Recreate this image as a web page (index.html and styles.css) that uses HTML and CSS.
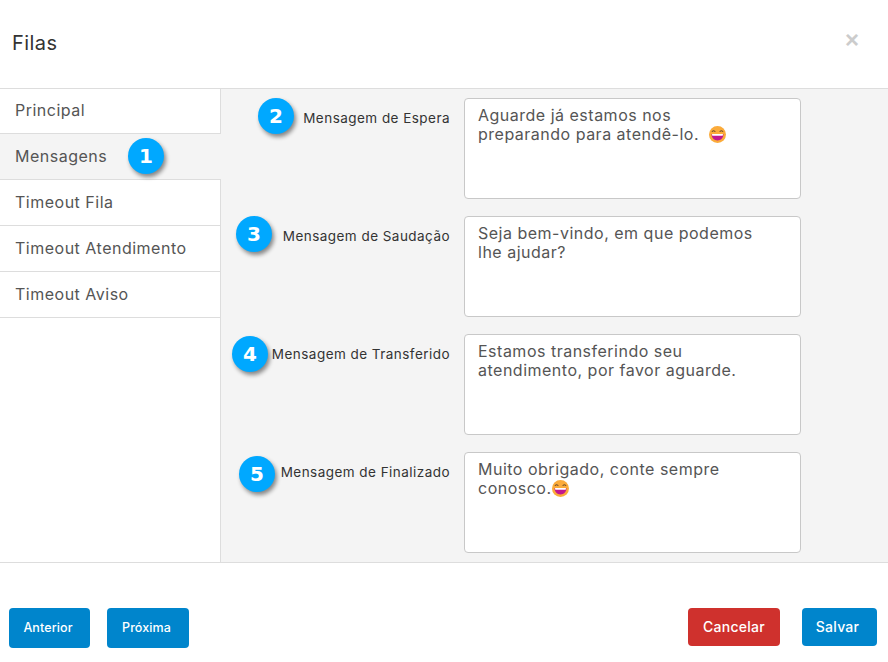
FILE: index.html
```html
<!DOCTYPE html>
<html lang="pt">
<head>
<meta charset="utf-8">
<title>Filas</title>
<link rel="stylesheet" href="styles.css">
</head>
<body>
<svg class="defs" width="0" height="0">
  <defs>
    <symbol id="emoji" viewBox="0 0 16 16">
      <circle cx="8" cy="8" r="8" fill="#fbab3a"/>
      <path d="M2.800 5.600c.5-1.500 2.600-1.500 3.100 0M10.100 5.600c.5-1.500 2.600-1.500 3.100 0" fill="none" stroke="#6b4a2a" stroke-width="1"/>
      <path d="M2.400 7.600h11.200c0 3.700-2.500 6-5.600 6S2.400 11.300 2.400 7.600z" fill="#c2188f"/>
      <path d="M2.800 7.600h10.400l-.3 1.600H3.100z" fill="#fff"/>
    </symbol>
  </defs>
</svg>
<div class="modal">
  <header class="head">
    <h1 class="title">Filas</h1>
    <span class="close">×</span>
  </header>
  <main class="body">
    <nav class="side">
      <a class="tab">Principal</a>
      <a class="tab active">Mensagens<span class="badge b1">1</span></a>
      <a class="tab">Timeout Fila</a>
      <a class="tab">Timeout Atendimento</a>
      <a class="tab">Timeout Aviso</a>
    </nav>
    <section class="panel">
      <div class="row">
        <label class="lbl"><span class="badge b2">2</span>Mensagem de Espera</label>
        <div class="area">Aguarde já estamos nos<br>preparando para atendê-lo. <svg class="emo"><use href="#emoji"/></svg></div>
      </div>
      <div class="row">
        <label class="lbl"><span class="badge b3">3</span>Mensagem de Saudação</label>
        <div class="area">Seja bem-vindo, em que podemos<br>lhe ajudar?</div>
      </div>
      <div class="row">
        <label class="lbl"><span class="badge b4">4</span>Mensagem de Transferido</label>
        <div class="area">Estamos transferindo seu<br>atendimento, por favor aguarde.</div>
      </div>
      <div class="row">
        <label class="lbl"><span class="badge b5">5</span>Mensagem de Finalizado</label>
        <div class="area">Muito obrigado, conte sempre<br>conosco.<svg class="emo tight"><use href="#emoji"/></svg></div>
      </div>
    </section>
  </main>
  <footer class="foot">
    <div class="group">
      <button class="btn blue small w81">Anterior</button>
      <button class="btn blue small w82">Próxima</button>
    </div>
    <div class="group right">
      <button class="btn red w92">Cancelar</button>
      <button class="btn blue w75">Salvar</button>
    </div>
  </footer>
</div>
</body>
</html>
```
FILE: styles.css
```css
* { box-sizing: border-box; }
html, body { margin: 0; padding: 0; }
body {
  width: 888px;
  height: 662px;
  background: #fff;
  font-family: "Inter", "Open Sans", sans-serif;
  color: #555;
  overflow: hidden;
}
.defs { position: absolute; }
.modal { display: flex; flex-direction: column; height: 662px; }
.head {
  height: 89px;
  flex: none;
  display: flex;
  align-items: center;
  justify-content: space-between;
  padding: 0 29px 3px 12px;
  border-bottom: 1px solid #ddd;
}
.title { margin: 0; font-size: 20px; font-weight: 400; color: #333; letter-spacing: .45px; }
.close { font-family: "Liberation Sans", sans-serif; font-size: 24px; font-weight: 700; color: #ccc; line-height: 1; padding-bottom: 6px; }
.body { display: flex; height: 474px; flex: none; border-bottom: 1px solid #ddd; }
.side { width: 221px; flex: none; border-right: 1px solid #ddd; }
.tab {
  position: relative;
  display: flex;
  align-items: center;
  height: 46px;
  padding: 0 15px 1px;
  font-size: 16px;
  color: #555;
  letter-spacing: .5px;
  border-bottom: 1px solid #ddd;
}
.tab:first-child { height: 45px; padding-bottom: 2px; }
.tab.active { background: #f4f4f4; margin-right: -1px; z-index: 1; }
.panel {
  flex: 1;
  background: #f4f4f4;
  display: flex;
  flex-direction: column;
  gap: 17px;
  padding-top: 9px;
}
.row { display: flex; height: 101px; position: relative; }
.lbl {
  width: 229px;
  flex: none;
  text-align: right;
  font-size: 13.5px;
  line-height: 20px;
  padding-top: 10px;
  color: #333;
  letter-spacing: .46px;
}
.area {
  margin-left: 14px;
  width: 337px;
  height: 101px;
  background: #fff;
  border: 1px solid #c8c8c8;
  border-radius: 4px;
  padding: 7px 13px;
  font-size: 16px;
  line-height: 19px;
  color: #555;
  letter-spacing: .5px;
}
.emo { width: 17px; height: 17px; vertical-align: -3px; margin-left: 5px; }
.emo.tight { margin-left: 0; }
.badge {
  position: absolute;
  width: 36px;
  height: 36px;
  border-radius: 50%;
  background: #00a8ff;
  color: #fff;
  font-family: "DejaVu Sans", sans-serif;
  font-weight: 700;
  font-size: 20px;
  line-height: 36px;
  text-align: center;
  letter-spacing: 0;
  box-shadow: 2px 3px 4px rgba(0,0,0,.45);
}
.b1 { left: 128px; top: 4px; }
.b2 { left: 37px; top: 0; }
.b3 { left: 15px; top: 0; }
.b4 { left: 11px; top: 2px; }
.b5 { left: 18px; top: 4px; }
.foot {
  flex: 1;
  display: flex;
  justify-content: space-between;
  padding: 45px 11px 0 9px;
}
.group { display: flex; gap: 17px; align-items: flex-start; }
.group.right { gap: 22px; }
.btn {
  border: 0;
  border-radius: 4px;
  color: #fff;
  font-family: inherit;
  font-size: 14px;
  font-weight: 500;
  letter-spacing: .25px;
  height: 38px;
  padding: 0 0 2px;
}
.btn.small { height: 40px; font-size: 12.5px; letter-spacing: .1px; padding: 0 3px 1px 0; }
.blue { background: #0085cc; }
.red { background: #cf312d; }
.w81 { width: 81px; }
.w82 { width: 82px; }
.w92 { width: 92px; }
.w75 { width: 75px; padding-right: 4px; }
```
